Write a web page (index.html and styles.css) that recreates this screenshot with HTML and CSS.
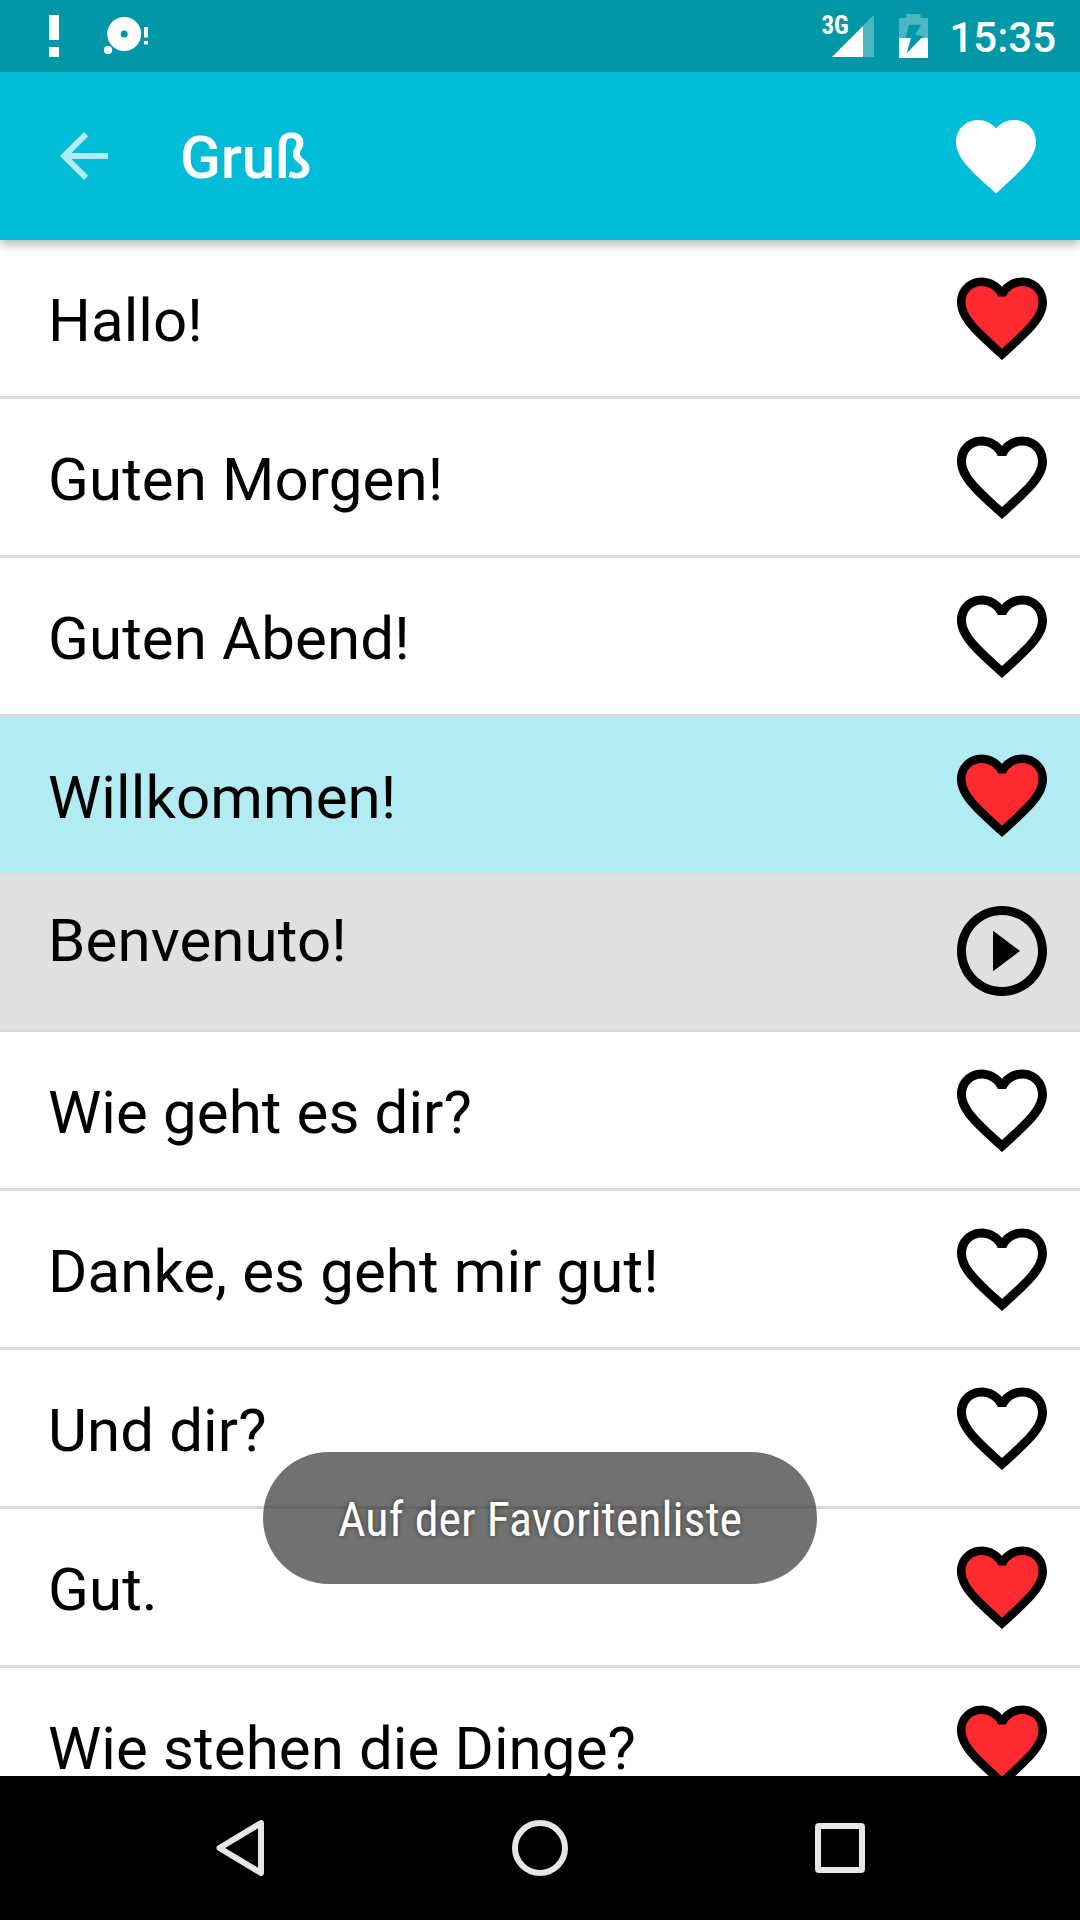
FILE: index.html
```html
<!DOCTYPE html>
<html lang="de">
<head>
<meta charset="utf-8">
<title>Gruß</title>
<link rel="stylesheet" href="styles.css">
</head>
<body>
<svg class="defs" width="0" height="0" aria-hidden="true">
  <symbol id="heart-line" viewBox="0 0 24 24">
    <path d="M16.5 3c-1.74 0-3.41.81-4.5 2.09C10.91 3.81 9.24 3 7.5 3 4.42 3 2 5.42 2 8.5c0 3.78 3.4 6.86 8.55 11.54L12 21.35l1.45-1.32C18.6 15.36 22 12.28 22 8.5 22 5.42 19.58 3 16.5 3zm-4.4 15.55l-.1.1-.1-.1C7.14 14.24 4 11.39 4 8.5 4 6.5 5.5 5 7.5 5c1.54 0 3.04.99 3.57 2.36h1.87C13.46 5.99 14.96 5 16.5 5c2 0 3.5 1.5 3.5 3.5 0 2.89-3.14 5.74-7.9 10.05z"/>
  </symbol>
  <symbol id="heart-full" viewBox="0 0 24 24">
    <path d="M12 21.35l-1.45-1.32C5.4 15.36 2 12.28 2 8.5 2 5.42 4.42 3 7.5 3c1.74 0 3.41.81 4.5 2.09C13.09 3.81 14.76 3 16.5 3 19.58 3 22 5.42 22 8.5c0 3.78-3.4 6.86-8.55 11.54L12 21.35z"/>
  </symbol>
  <symbol id="heart-red" viewBox="0 0 24 24">
    <use href="#heart-full"/>
    <path fill="#ff2a2f" stroke="#ff2a2f" stroke-width=".25" d="M12.1 18.55l-.1.1-.1-.1C7.14 14.24 4 11.39 4 8.5 4 6.5 5.5 5 7.5 5c1.54 0 3.04.99 3.57 2.36h1.87C13.46 5.99 14.96 5 16.5 5c2 0 3.5 1.5 3.5 3.5 0 2.89-3.14 5.74-7.9 10.05z"/>
  </symbol>
  <symbol id="play" viewBox="0 0 24 24">
    <path d="M10 16.5l6-4.5-6-4.5v9zM12 2C6.48 2 2 6.48 2 12s4.48 10 10 10 10-4.48 10-10S17.52 2 12 2zm0 18c-4.41 0-8-3.59-8-8s3.59-8 8-8 8 3.59 8 8-3.59 8-8 8z"/>
  </symbol>
</svg>

<header class="status-bar">
  <svg class="alert" width="10" height="42" viewBox="0 0 10 42"><path d="M0 0h10v25H0zM0 32h10v10H0z"/></svg>
  <svg class="disc" width="46" height="40" viewBox="0 0 46 40">
    <path fill-rule="evenodd" d="M20.2 1a17 17 0 1 0 0 34a17 17 0 1 0 0-34zM20.2 14.5a3.5 3.5 0 1 1 0 7a3.5 3.5 0 1 1 0-7z"/>
    <circle class="disc-gap" cx="4" cy="34" r="5.2"/>
    <circle cx="4" cy="34" r="4.3"/>
    <path d="M40 11h4v10.500h-4zM40 25h4v3.500h-4z"/>
  </svg>
  <span class="network">3G</span>
  <svg class="signal" width="42" height="42" viewBox="0 0 42 42">
    <path class="dim" d="M31 11L42 0v42H31z"/>
    <path d="M0 42L31 11v31z"/>
  </svg>
  <svg class="battery" width="29" height="44" viewBox="0 0 29 44">
    <path class="dim" fill-rule="evenodd" d="M0 4h7.500V0h14v4H29v20H0zM10 10.700L6.700 24H22.400L24.300 22L16 21L22 10.700z"/>
    <path fill-rule="evenodd" d="M0 24H29v20H0zM12 24L7.700 39.300L22.400 24z"/>
  </svg>
  <time class="clock">15:35</time>
</header>

<div class="app-bar">
  <svg class="back" width="72" height="72" viewBox="0 0 24 24"><path d="M20 11H7.830l5.590-5.590L12 4l-8 8 8 8 1.410-1.410L7.830 13H20v-2z"/></svg>
  <h1 class="title">Gruß</h1>
  <svg class="favorites" width="96" height="96"><use href="#heart-full"/></svg>
</div>

<main class="phrases">
  <div class="row"><span class="phrase">Hallo!</span><svg class="icon"><use href="#heart-red"/></svg></div>
  <div class="row"><span class="phrase">Guten Morgen!</span><svg class="icon"><use href="#heart-line"/></svg></div>
  <div class="row"><span class="phrase">Guten Abend!</span><svg class="icon"><use href="#heart-line"/></svg></div>
  <div class="row selected"><span class="phrase">Willkommen!</span><svg class="icon"><use href="#heart-red"/></svg></div>
  <div class="row translation"><span class="phrase">Benvenuto!</span><svg class="icon"><use href="#play"/></svg></div>
  <div class="row"><span class="phrase">Wie geht es dir?</span><svg class="icon"><use href="#heart-line"/></svg></div>
  <div class="row"><span class="phrase">Danke, es geht mir gut!</span><svg class="icon"><use href="#heart-line"/></svg></div>
  <div class="row"><span class="phrase">Und dir?</span><svg class="icon"><use href="#heart-line"/></svg></div>
  <div class="row"><span class="phrase">Gut.</span><svg class="icon"><use href="#heart-red"/></svg></div>
  <div class="row"><span class="phrase">Wie stehen die Dinge?</span><svg class="icon"><use href="#heart-red"/></svg></div>
</main>

<nav class="nav-bar">
  <svg width="60" height="60" viewBox="0 0 60 60"><path d="M51 5L9.500 30L51 55z"/></svg>
  <svg width="60" height="60" viewBox="0 0 60 60"><circle cx="30" cy="30" r="25"/></svg>
  <svg width="60" height="60" viewBox="0 0 60 60"><rect x="8" y="8" width="44" height="44" rx="1"/></svg>
</nav>

<div class="toast"><span class="toast-text">Auf der Favoritenliste</span></div>
</body>
</html>
```

FILE: styles.css
```css
* { box-sizing: border-box; }

body {
  position: relative;
  display: flex;
  flex-direction: column;
  width: 1080px;
  height: 1920px;
  margin: 0;
  overflow: hidden;
  background: #fff;
  color: #000;
  font-family: Roboto, sans-serif;
}

svg { display: block; flex: none; }
.defs { position: absolute; }

.status-bar {
  display: flex;
  align-items: flex-start;
  flex: none;
  height: 72px;
  padding: 15px 24px 0 49px;
  background: #0097a7;
  color: #fff;
  fill: #fff;
}
.disc { margin: 1px 0 0 45px; }
.disc-gap { fill: #0097a7; }
.dim { fill-opacity: .3; }
.network {
  width: 28px;
  margin: 1px 0 0 auto;
  font-size: 25px;
  font-weight: 700;
  font-stretch: 75%;
  line-height: 20px;
}
.signal { margin-left: -17px; }
.battery { margin: -1px 0 0 25px; }
.clock {
  margin: 1px 0 0 21px;
  font-size: 42px;
  font-weight: 500;
  line-height: 44px;
}

.app-bar {
  position: relative;
  z-index: 1;
  display: flex;
  align-items: center;
  flex: none;
  height: 168px;
  padding: 0 36px 0 48px;
  background: #00bcd7;
  color: #fff;
  fill: #fff;
  box-shadow: 0 5px 10px rgba(0, 0, 0, .27);
}
.back { fill-opacity: .7; }
.title {
  flex: 1;
  margin: 0 0 0 60px;
  padding-top: 4px;
  font-size: 60px;
  font-weight: 500;
  letter-spacing: -.2px;
  line-height: 70px;
}

.phrases {
  flex: 1;
  min-height: 0;
  overflow: hidden;
}
.row {
  display: flex;
  align-items: center;
  justify-content: space-between;
  height: 159px;
  padding: 0 24px 0 48px;
  border-bottom: 3px solid #dadada;
}
.phrase {
  padding-top: 6px;
  font-size: 60px;
  letter-spacing: .1px;
  line-height: 70px;
  white-space: nowrap;
}
.icon { width: 108px; height: 108px; }
.selected {
  height: 156px;
  border-bottom: 0;
  background: #b2ebf2;
}
.translation { background: #e0e0e0; }
.translation .phrase { padding: 0 0 20px; }

.nav-bar {
  display: flex;
  align-items: center;
  justify-content: space-between;
  flex: none;
  height: 144px;
  padding: 0 210px;
  background: #000;
  fill: none;
  stroke: #e6e6e6;
  stroke-width: 6;
  stroke-linejoin: round;
}

.toast {
  position: absolute;
  z-index: 2;
  top: 1452px;
  left: 263px;
  display: flex;
  align-items: center;
  justify-content: center;
  width: 554px;
  height: 132px;
  border-radius: 66px;
  background: rgba(53, 53, 53, .7);
  color: #fff;
}
.toast-text {
  padding-top: 3px;
  font-size: 48px;
  font-stretch: 75%;
  line-height: 56px;
  white-space: nowrap;
  text-shadow: 0 0 5px rgba(0, 0, 0, .5);
}
```
